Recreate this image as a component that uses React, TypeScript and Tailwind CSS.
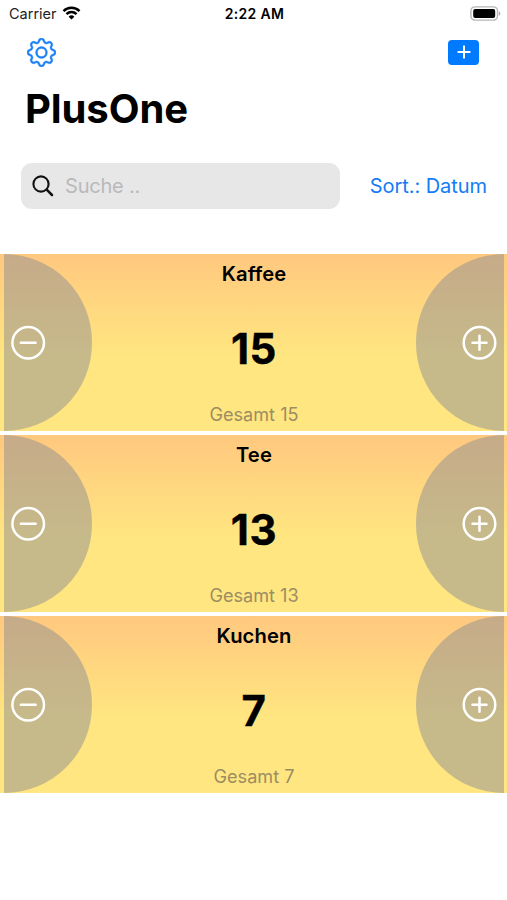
import { FC, useState } from "react";
import { BsGear } from "react-icons/bs";

interface Counter {
  name: string;
  count: number;
}

interface CounterCardProps {
  counter: Counter;
  onChange: (step: number) => void;
}

const initialCounters: Counter[] = [
  { name: "Kaffee", count: 15 },
  { name: "Tee", count: 13 },
  { name: "Kuchen", count: 7 },
];

const StatusBar: FC = () => (
  <div className="grid h-7 grid-cols-3 items-center pl-[8px] pr-[6px] text-[14.5px] leading-none">
    <div className="flex items-center gap-[5px] pl-px">
      <span className="text-[#222]">Carrier</span>
      <svg className="-mt-[2px]" width="19" height="14" viewBox="0 0 18 14" fill="none" stroke="#000" strokeWidth="2.5">
        <path d="M1 5.1a11.3 11.3 0 0 1 16 0" />
        <path d="M4 8.2a7 7 0 0 1 10 0" />
        <path d="M9 13.6 6.1 10.7a4.1 4.1 0 0 1 5.8 0Z" fill="#000" stroke="none" />
      </svg>
    </div>
    <span className="text-center text-[14px] font-semibold tracking-[0.3px]">2:22 AM</span>
    <svg className="-mt-[2px] justify-self-end" width="31" height="15" viewBox="0 0 31 15">
      <rect x="0.9" y="0.9" width="26.6" height="13.2" rx="4" fill="#fff" stroke="#b5b5b5" strokeWidth="1.4" />
      <rect x="3.2" y="3" width="22" height="9" rx="2" fill="#000" />
      <path d="M28.8 5.2c2 .8 2 3.8 0 4.6Z" fill="#aaa" />
    </svg>
  </div>
);

const CounterCard: FC<CounterCardProps> = ({ counter, onChange }) => {
  return (
    <section className="flex h-[177px] justify-between bg-[linear-gradient(180deg,#ffc87f_0%,#ffe680_58%,#ffe680_100%)] pl-1 pr-[3px]">
      {/* Decrease */}
      <button
        aria-label="minus"
        className="flex w-[88px] items-center rounded-r-[88.5px] bg-[#8e8e93]/50 pl-[7px]"
        onClick={() => onChange(-1)}
      >
        <svg width="35" height="35" viewBox="0 0 35 35" fill="none" stroke="#fff" strokeWidth="2.5">
          <circle cx="17.2" cy="17.8" r="15.8" />
          <path d="M9.8 17.8h14.8" strokeLinecap="round" />
        </svg>
      </button>

      {/* Values */}
      <div className="flex flex-col items-center">
        <h2 className="mt-[6px] text-[20.2px] font-semibold leading-7 tracking-[0.1px]">{counter.name}</h2>
        <p className="mt-[37px] text-[42px] font-bold leading-[48px] tracking-[0.6px] [-webkit-text-stroke:0.4px_#000]">
          {counter.count}
        </p>
        <p className="mt-[29px] text-[18.1px] leading-6 text-[#9c8d63]">Gesamt {counter.count}</p>
      </div>

      {/* Increase */}
      <button
        aria-label="plus"
        className="flex w-[88px] items-center justify-end rounded-l-[88.5px] bg-[#8e8e93]/50 pr-[7px]"
        onClick={() => onChange(1)}
      >
        <svg width="35" height="35" viewBox="0 0 35 35" fill="none" stroke="#fff" strokeWidth="2.5">
          <circle cx="17.5" cy="17.8" r="15.8" />
          <path d="M10.5 17.8h14M17.5 10.8v14" strokeLinecap="round" />
        </svg>
      </button>
    </section>
  );
};

const App: FC = () => {
  const [counters, setCounters] = useState<Counter[]>(initialCounters);

  const changeCount = (index: number, step: number) => {
    setCounters(counters.map((c, i) => (i === index ? { ...c, count: c.count + step } : c)));
  };

  return (
    <div className="h-[900px] w-[507px] overflow-hidden bg-white font-['Inter','Liberation_Sans',sans-serif] text-black">
      <StatusBar />

      {/* Toolbar */}
      <div className="flex h-12 items-center justify-between pl-[27px] pr-[28px]">
        <button aria-label="settings" className="text-[#1a80f5]">
          <BsGear size={29} stroke="currentColor" strokeWidth={0.25} />
        </button>
        <button aria-label="add" className="flex h-[25px] w-[31px] items-center justify-center rounded-[4px] bg-[#007aff]">
          <svg width="14" height="14" viewBox="0 0 14 14" stroke="#fff" strokeWidth="2" strokeLinecap="round">
            <path d="M1.3 7h11.4M7 1.3v11.4" />
          </svg>
        </button>
      </div>

      <h1 className="ml-[25px] mt-[8px] text-[40px] font-bold leading-[50px] tracking-[-0.1px]">PlusOne</h1>

      {/* Search */}
      <div className="mt-[29px] flex items-center justify-between pl-[21px] pr-5">
        <div className="flex h-[46px] w-[319px] items-center rounded-[11px] bg-[#e7e7e7] pl-[11px]">
          <svg width="22" height="22" viewBox="0 0 22 22" fill="none" stroke="#111" strokeWidth="2.1" strokeLinecap="round">
            <circle cx="9" cy="9" r="7.6" />
            <path d="m14.7 14.7 5.3 5.3" strokeWidth="2.5" />
          </svg>
          <input
            className="ml-[11px] w-60 bg-transparent text-[20px] tracking-[-0.2px] outline-none placeholder:text-[#b9b9bb]"
            placeholder="Suche .."
          />
        </div>
        <button className="text-[20px] tracking-[-0.05px] text-[#147cf5]">Sort.: Datum</button>
      </div>

      {/* Counters */}
      <main className="mt-[45px] flex flex-col gap-1">
        {counters.map((counter, index) => (
          <CounterCard key={counter.name} counter={counter} onChange={(step) => changeCount(index, step)} />
        ))}
      </main>
    </div>
  );
};

export default App;
